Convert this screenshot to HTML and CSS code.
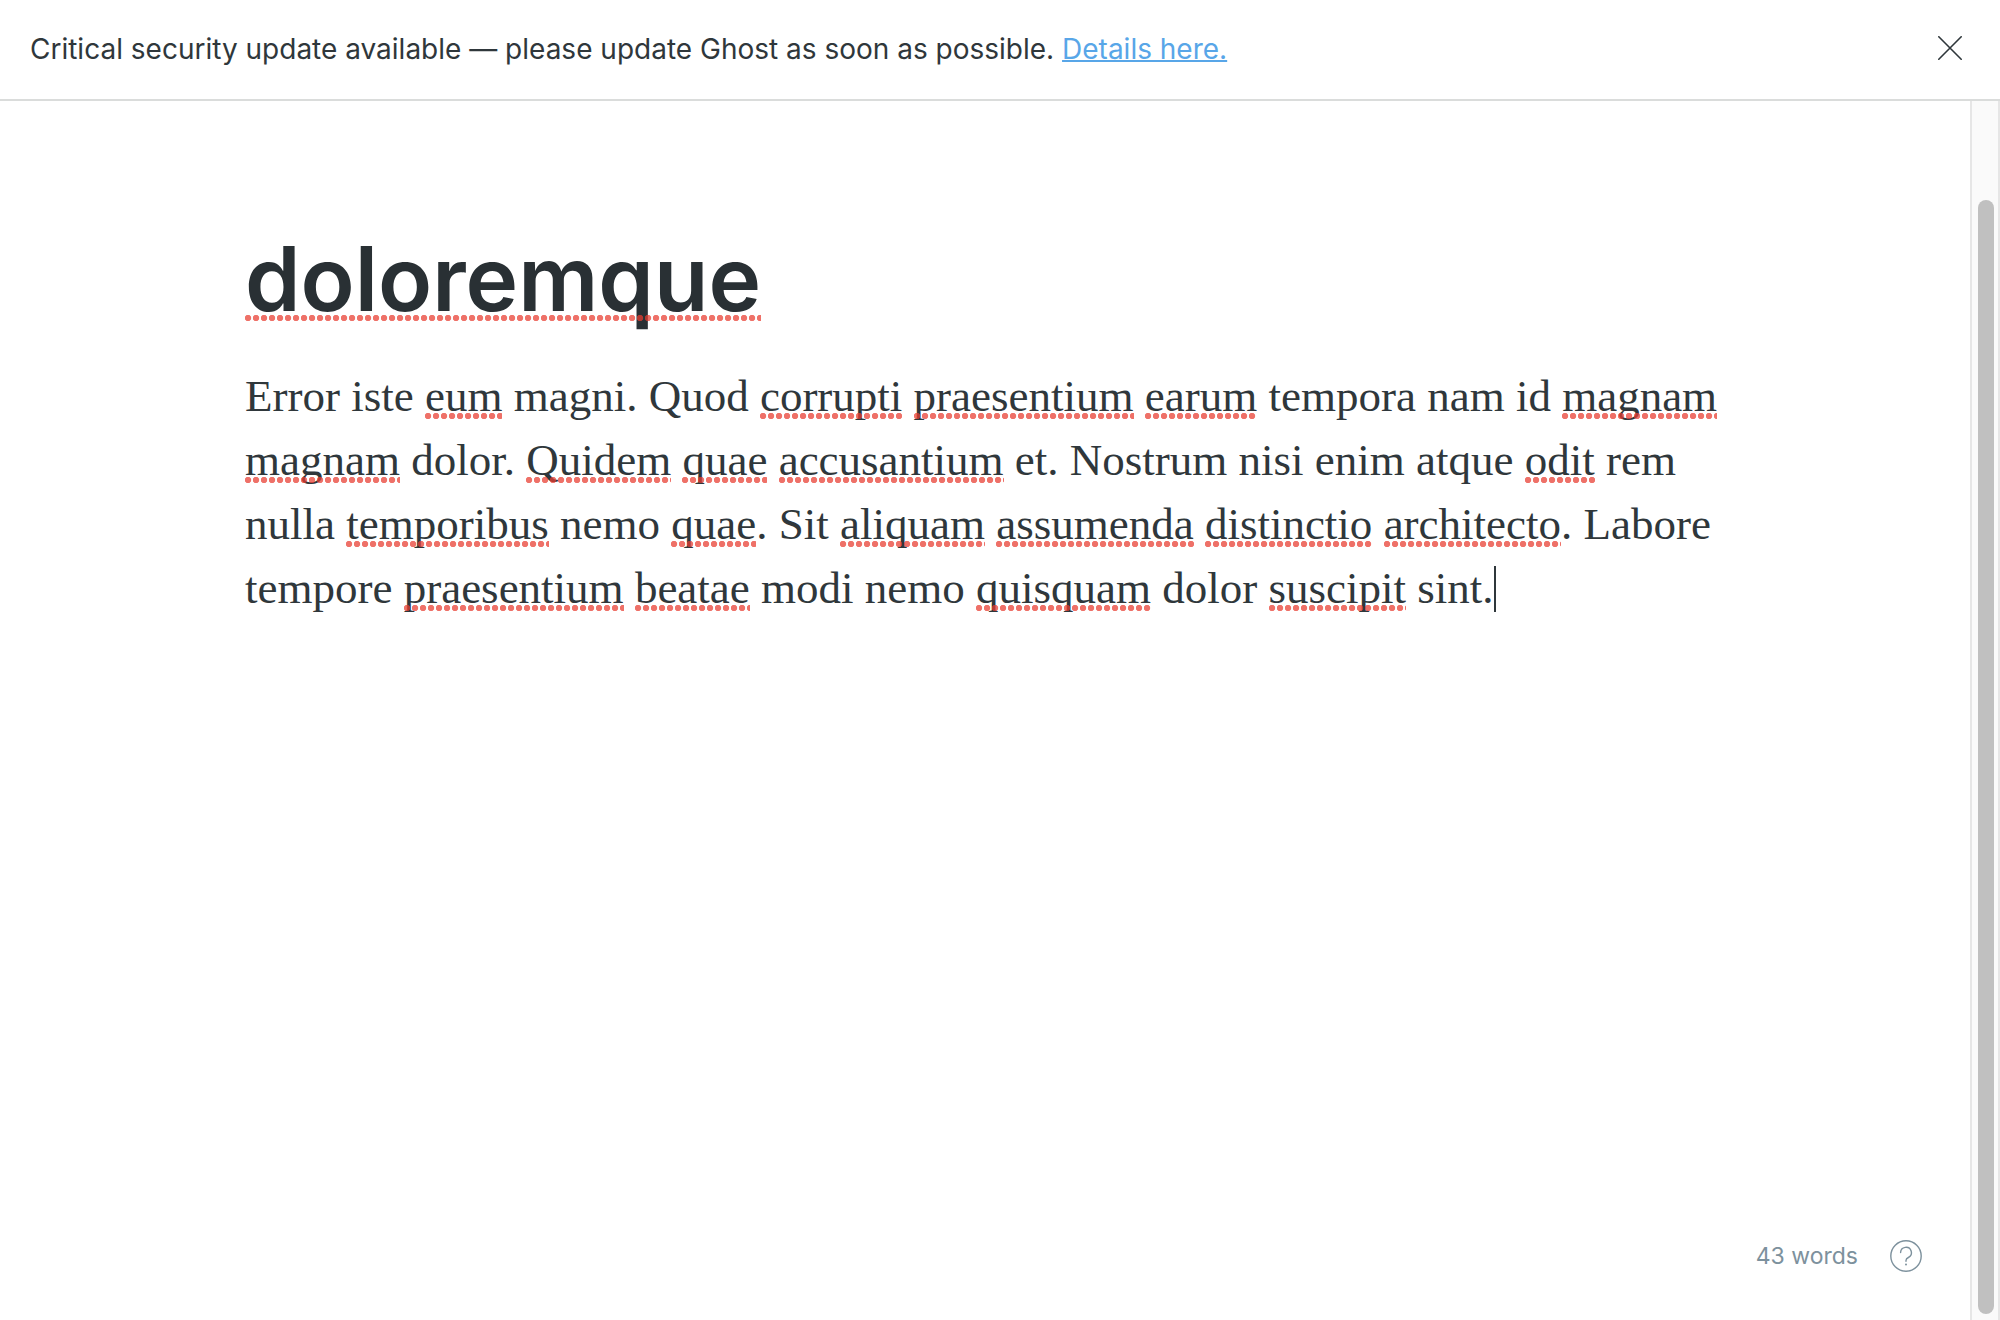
FILE: index.html
```
<!DOCTYPE html>
<html lang="en">
<head>
<meta charset="utf-8">
<title>Editor</title>
<link rel="stylesheet" href="styles.css">
</head>
<body>
<div class="app">
  <header class="alert">
    <p class="alert-text">Critical security update available — please update Ghost as soon as possible. <a class="alert-link" href="#">Details here.</a></p>
    <button class="alert-close" type="button" aria-label="Close">
      <svg width="24" height="24" viewBox="0 0 24 24" fill="none" stroke="currentColor" stroke-width="1.6" stroke-linecap="round"><path d="M.8.8l22.4 22.4M23.2.8L.8 23.2"/></svg>
    </button>
  </header>
  <div class="workspace">
    <main class="editor">
      <article class="post">
        <h1 class="post-title" contenteditable="true" spellcheck="false"><span class="misspelt">doloremque</span></h1>
        <p class="post-body" contenteditable="true" spellcheck="false">Error iste <span class="misspelt">eum</span> magni. Quod <span class="misspelt">corrupti</span> <span class="misspelt">praesentium</span> <span class="misspelt">earum</span> tempora nam id <span class="misspelt">magnam</span> <span class="misspelt">magnam</span> dolor. <span class="misspelt">Quidem</span> <span class="misspelt">quae</span> <span class="misspelt">accusantium</span> et. Nostrum nisi enim atque <span class="misspelt">odit</span> rem nulla <span class="misspelt">temporibus</span> nemo <span class="misspelt">quae</span>. Sit <span class="misspelt">aliquam</span> <span class="misspelt">assumenda</span> <span class="misspelt">distinctio</span> <span class="misspelt">architecto</span>. Labore tempore <span class="misspelt">praesentium</span> <span class="misspelt">beatae</span> modi nemo <span class="misspelt">quisquam</span> dolor <span class="misspelt">suscipit</span> sint.<span class="caret"></span></p>
      </article>
      <footer class="status">
        <span>43 words</span>
        <button class="help" type="button" aria-label="Help">
          <svg width="32" height="32" viewBox="0 0 32 32" fill="none" stroke="currentColor" stroke-width="1.4" stroke-linecap="round" stroke-linejoin="round"><circle cx="16" cy="16" r="15.2"/><path d="M10.600 12.600a5.400 5.400 0 1 1 7.800 4.900c-1.600.8-2.400 1.500-2.400 3V21.200"/><circle cx="16" cy="24.600" r="1" fill="currentColor" stroke="none"/></svg>
        </button>
      </footer>
    </main>
    <div class="scrollbar" aria-hidden="true"><div class="scrollbar-thumb"></div></div>
  </div>
</div>
</body>
</html>
```
FILE: styles.css
```
* { box-sizing: border-box; }

body {
  margin: 0;
  background: #fff;
  color: #2f373b;
  font-family: Inter, "Liberation Sans", sans-serif;
}

button {
  display: flex;
  padding: 0;
  border: 0;
  background: none;
  color: inherit;
  cursor: pointer;
}

.app {
  display: flex;
  flex-direction: column;
  min-height: 100vh;
}

.alert {
  display: flex;
  align-items: flex-start;
  justify-content: space-between;
  padding: 30px 38px 31px 30px;
  border-bottom: 2px solid #dadcdb;
}

.alert-text {
  margin: 0;
  font-size: 28px;
  line-height: 38px;
}

.alert-close {
  padding: 6px 0;
}

.alert-link {
  color: #58a6e8;
  text-decoration-thickness: 2px;
}

.workspace {
  display: flex;
  flex: 1;
}

.editor {
  display: flex;
  flex: 1;
  flex-direction: column;
  justify-content: space-between;
}

.post {
  width: 100%;
  max-width: 1480px;
  margin: 0 auto;
  padding-top: 120px;
}

.post-title {
  margin: 0;
  color: #293034;
  font-size: 89px;
  font-weight: 600;
  line-height: 116px;
  outline: 0;
}

.post-body {
  margin: 27px 0 0;
  font-family: Georgia, "Liberation Serif", serif;
  font-size: 45px;
  line-height: 64px;
  outline: 0;
}

.misspelt {
  position: relative;
}

/* Row of spelling dots laid over the foot of the word */
.misspelt::after {
  position: absolute;
  right: 0;
  bottom: 2px;
  left: 0;
  height: 6px;
  background: radial-gradient(circle at 3px 3px, rgba(232, 60, 48, .73) 2.8px, transparent 3.6px) 0 0 / 8px 6px repeat-x;
  content: "";
}

.post-title .misspelt::after {
  bottom: 11px;
}

.caret {
  display: inline-block;
  width: 2px;
  height: 46px;
  margin-right: -2px;
  background: #2f373b;
  vertical-align: -9px;
}

.status {
  display: flex;
  align-items: center;
  justify-content: flex-end;
  gap: 32px;
  padding: 0 48px 48px;
  color: #7d919d;
  font-size: 23px;
  line-height: 32px;
}

.scrollbar {
  display: flex;
  width: 30px;
  padding: 99px 4px 6px 6px;
  border: solid #e6e6e6;
  border-width: 0 2px;
  background: #fafafa;
}

.scrollbar-thumb {
  flex: 1;
  border-radius: 8px;
  background: #c0c0c0;
}
```
